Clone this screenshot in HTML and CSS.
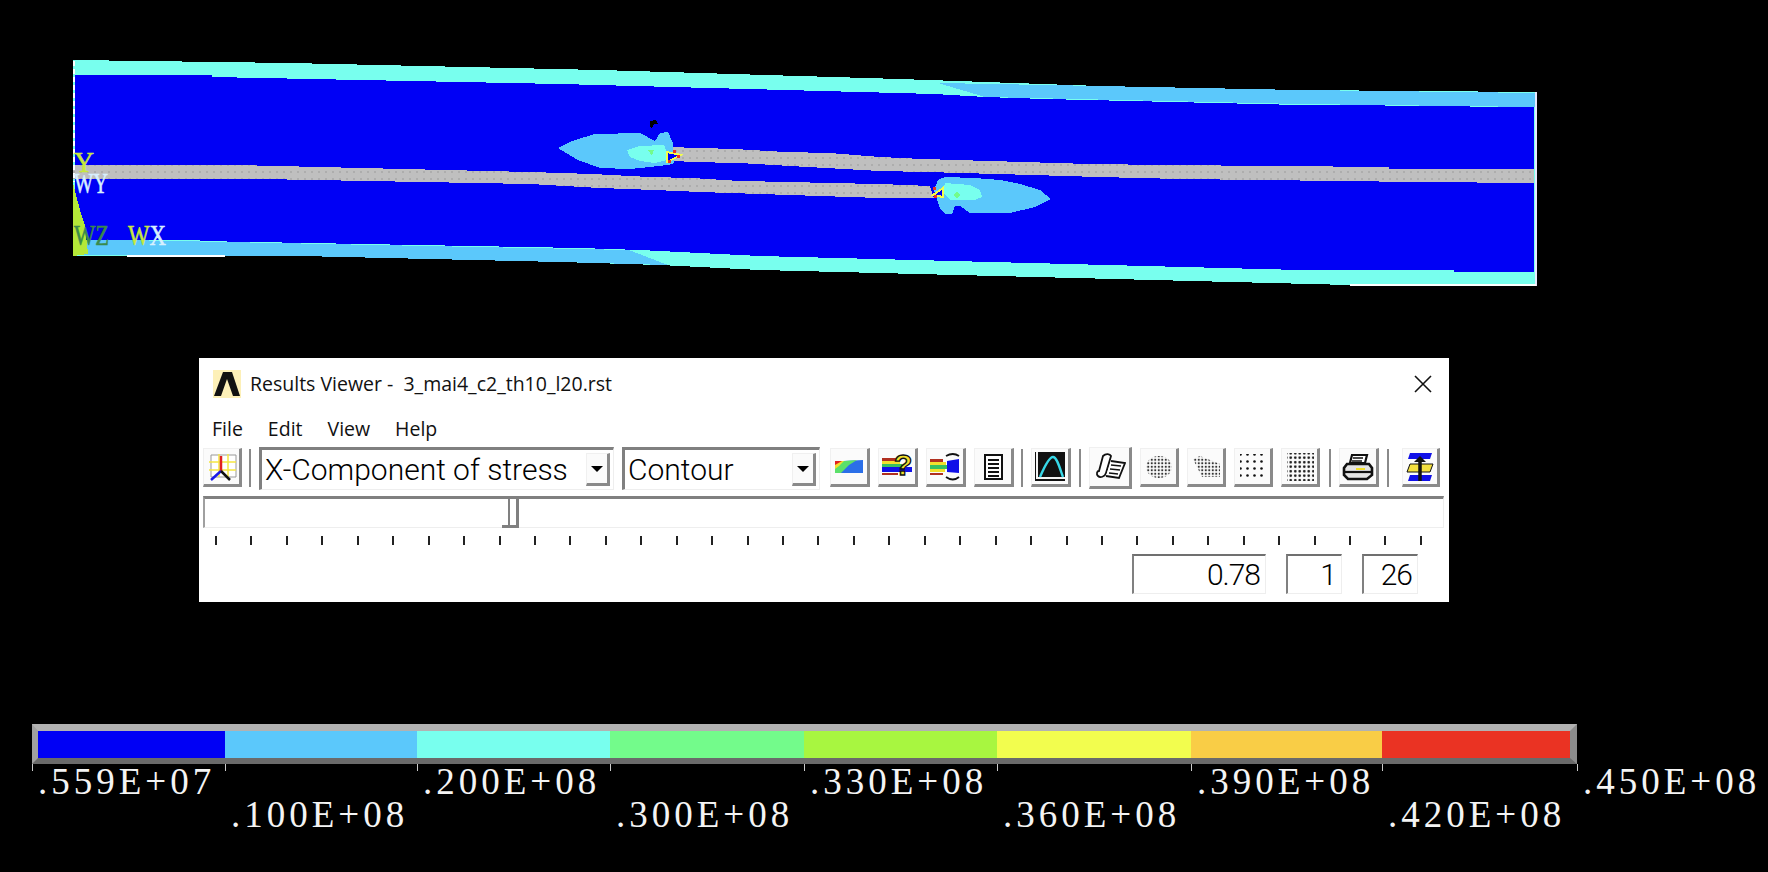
FILE: index.html
```html
<!DOCTYPE html>
<html lang="en">
<head>
    <meta charset="UTF-8">
    <title>Results Viewer</title>
    <link rel="stylesheet" href="styles.css">
</head>
<body>
    <svg class="plot" viewBox="0 0 1768 358">
        <defs>
            <pattern id="mesh" width="7" height="7" patternUnits="userSpaceOnUse">
                <rect width="7" height="7" fill="#bfbfbf"/>
                <rect x="3" y="3" width="1.5" height="1.5" fill="#adadad"/>
            </pattern>
        </defs>
        <!-- plate outline, aqua base -->
        <polygon fill="#78ffee" points="73,60 290,63 600,70 900,79 1100,86 1300,90 1536,92 1536,286 1350,285 760,270 660,265 560,262 300,256 73,256"/>
        <!-- wedges -->
        <polygon fill="#5bc8fb" points="938,83 1100,86 1300,90 1536,93 1536,107 1300,104 985,97"/>
        <polygon fill="#5bc8fb" points="73,239 629,250 668,265 560,262 300,256 73,255"/>
        <!-- blue body -->
        <polygon fill="#0000f5" points="75,75 212,75 212,77 560,84 935,94 985,97 1045,99 1300,105 1470,106 1470,107 1534,107 1534,272 1454,272 1454,270 1300,270 760,256 640,250 580,248 200,241 200,240 75,240"/>
        <!-- interface layers -->
        <polygon fill="url(#mesh)" points="667,147 735,149 785,152 830,153 880,157 923,159 1023,162 1090,164 1165,165 1389,167 1389,169 1534,169 1534,183 1419,182 1180,179 1098,177 1032,175 926,172 880,171 790,166 740,163 690,162 667,160"/>
        <polygon fill="url(#mesh)" points="73,165 235,165 530,172 592,174 650,177 692,178 740,181 790,182 830,183 880,184 930,186 934,198 880,198 790,195 700,192 655,190 600,188 530,184 260,179 73,179"/>
        <!-- crack tip contour, left -->
        <polygon fill="#5bc8fb" points="558,148 572,141 595,134 640,133 655,141 660,133 668,132 673,143 674,163 668,165 640,168 630,169 600,168 578,160"/>
        <polygon fill="#78ffee" points="627,150 640,146 664,145 667,152 667,160 655,163 640,161 630,157"/>
        <polygon fill="#73fb8b" points="648,150 654,150 652,156"/>
        <polygon fill="#0000f5" stroke="#f2fd4e" stroke-width="2" points="667,152 681,155 667,162"/>
        <rect x="673" y="150" width="3" height="3" fill="#ea3323"/>
        <rect x="677" y="155" width="3" height="3" fill="#ea3323"/>
        <rect x="668" y="160" width="3" height="3" fill="#ea3323"/>
        <path d="M650 121 L656 120 L658 124 L654 124 L652 128 L650 127 Z" fill="#000"/>
        <!-- crack tip contour, right -->
        <polygon fill="#5bc8fb" points="1051,199 1040,190 1020,184 1000,180 975,178 945,177 938,180 934,190 937,200 940,208 945,214 952,214 955,206 960,206 970,213 1010,213 1035,207"/>
        <polygon fill="#78ffee" points="945,183 970,185 980,190 982,197 975,200 950,200 943,193"/>
        <polygon fill="#73fb8b" points="957,191 960,195 957,199 954,195"/>
        <polygon fill="#0000f5" stroke="#f2fd4e" stroke-width="2" points="933,195 943,188 943,197"/>
        <rect x="933" y="187" width="3" height="3" fill="#ea3323"/>
        <rect x="934" y="195" width="3" height="3" fill="#ea3323"/>
        <!-- edges -->
        <path d="M74 61 V182" stroke="#fff" stroke-width="2" stroke-dasharray="5 3"/>
        <path d="M1536 92 V286" stroke="#e8e8ff" stroke-width="1.5"/>
        <path d="M1350 285 H1536 M127 256 H225" stroke="#fff" stroke-width="1.5"/>
        <!-- triad -->
        <polygon fill="#b4e838" points="73,183 76,195 80,210 85,225 88,254 73,256"/>
        <text class="triad triad-yellow" x="74" y="172" textLength="20" lengthAdjust="spacingAndGlyphs">Y</text>
        <text class="triad triad-white" x="74" y="193" textLength="34" lengthAdjust="spacingAndGlyphs">WY</text>
        <text class="triad triad-dark" x="74" y="245" textLength="35" lengthAdjust="spacingAndGlyphs">WZ</text>
        <text class="triad triad-yellow" x="128" y="245" textLength="38" lengthAdjust="spacingAndGlyphs">W<tspan class="triad-white">X</tspan></text>
    </svg>

    <div class="window">
        <div class="title-row">
            <svg class="app-icon" viewBox="0 0 28 28">
                <rect width="28" height="28" fill="#fdf0b8"/>
                <path d="M1 26 L10 2 H19 L27 26 H20 L14 9 L8 26 Z" fill="#111"/>
            </svg>
            <span class="title">Results Viewer -  3_mai4_c2_th10_l20.rst</span>
            <svg class="close" viewBox="0 0 18 18">
                <path d="M1 1 L17 17 M17 1 L1 17" stroke="#111" stroke-width="1.6"/>
            </svg>
        </div>
        <div class="menu">
            <span>File</span>
            <span>Edit</span>
            <span>View</span>
            <span>Help</span>
        </div>
        <div class="toolbar">
            <div class="btn btn-first">
                <svg viewBox="0 0 32 32">
                    <path d="M5 4 H30 V26 H5 Z" fill="#fff" stroke="#999"/>
                    <path d="M3 11 H30 M3 19 H30 M13 3 V26 M22 3 V26" stroke="#f5e642" stroke-width="1.5"/>
                    <path d="M15 20 V5" stroke="#e02020" stroke-width="2.5"/>
                    <path d="M15 20 L5 29" stroke="#1a1ae8" stroke-width="2.5"/>
                    <path d="M15 20 L24 29" stroke="#111" stroke-width="2.5"/>
                </svg>
            </div>
            <div class="sep sep-tight"></div>
            <div class="combo combo-item">
                <span>X-Component of stress</span>
                <div class="combo-arrow"></div>
            </div>
            <div class="combo combo-type">
                <span>Contour</span>
                <div class="combo-arrow"></div>
            </div>
            <div class="btn btn-group">
                <svg viewBox="0 0 32 32">
                    <polygon points="2,10 10,10 30,9 30,22 2,22" fill="#2b6fe8"/>
                    <polygon points="2,10 12,10 24,9 16,14 8,22 2,22" fill="#5be06a"/>
                    <polygon points="2,10 11,10 6,15 2,18" fill="#f2e02c"/>
                    <polygon points="2,10 9,10 2,14" fill="#e02020"/>
                </svg>
            </div>
            <div class="btn">
                <svg viewBox="0 0 32 32">
                    <rect x="1" y="7" width="18" height="3" fill="#b03020"/>
                    <rect x="1" y="10" width="18" height="3" fill="#f2e02c"/>
                    <rect x="1" y="13" width="20" height="3" fill="#38c060"/>
                    <rect x="1" y="16" width="30" height="5" fill="#1010e8"/>
                    <rect x="1" y="22" width="16" height="2" fill="#b03020"/>
                    <text class="query" x="13" y="24">?</text>
                </svg>
            </div>
            <div class="btn">
                <svg viewBox="0 0 32 32">
                    <rect x="1" y="8" width="13" height="3" fill="#b03020"/>
                    <rect x="1" y="11" width="16" height="3" fill="#f2e02c"/>
                    <rect x="1" y="14" width="18" height="4" fill="#38c060"/>
                    <polygon points="18,10 30,8 30,22 18,21" fill="#1010e8"/>
                    <rect x="1" y="18" width="15" height="3" fill="#f2e02c"/>
                    <rect x="1" y="22" width="13" height="2" fill="#b03020"/>
                    <path d="M17 5 Q24 1 30 5 M17 26 Q24 31 30 26" fill="none" stroke="#111" stroke-width="1.8"/>
                </svg>
            </div>
            <div class="btn">
                <svg viewBox="0 0 32 32">
                    <rect x="8" y="4" width="17" height="24" fill="#fff" stroke="#111" stroke-width="2"/>
                    <path d="M11 9 H22 M11 13 H22 M11 17 H22 M11 21 H22 M11 25 H22" stroke="#111" stroke-width="2"/>
                </svg>
            </div>
            <div class="sep sep-tight"></div>
            <div class="btn">
                <svg viewBox="0 0 32 32">
                    <rect x="1" y="1" width="30" height="29" fill="#111"/>
                    <path d="M3 1 V27 H31" fill="none" stroke="#f4f4f4" stroke-width="2"/>
                    <path d="M6 26 C12 12 16 6 19 6 C23 6 26 18 29 26" fill="none" stroke="#38d8e8" stroke-width="2.4"/>
                </svg>
            </div>
            <div class="sep"></div>
            <div class="btn btn-raised">
                <svg viewBox="0 0 32 32">
                    <path d="M9 5 C12 2 16 3 17 5 L12 22 C11 26 6 27 4 25 C2 23 3 20 5 20 Z" fill="#fff" stroke="#111" stroke-width="1.8"/>
                    <path d="M17 10 L31 12 L25 27 L12 25" fill="#fff" stroke="#111" stroke-width="1.8"/>
                    <path d="M17 14 L27 15 M16 18 L26 19 M15 22 L24 23" stroke="#111" stroke-width="1.6"/>
                </svg>
            </div>
            <div class="btn btn-narrow">
                <svg viewBox="0 0 32 32">
                    <defs>
                        <pattern id="dots-fine" width="3.5" height="3.5" patternUnits="userSpaceOnUse">
                            <circle cx="1.75" cy="1.75" r="1.1" fill="#333"/>
                        </pattern>
                    </defs>
                    <ellipse cx="16" cy="16" rx="13" ry="11" fill="url(#dots-fine)"/>
                </svg>
            </div>
            <div class="btn btn-narrow">
                <svg viewBox="0 0 32 32">
                    <polygon points="3,8 10,5 30,13 30,26 12,26 6,14" fill="url(#dots-fine)"/>
                </svg>
            </div>
            <div class="btn btn-narrow">
                <svg viewBox="0 0 32 32">
                    <defs>
                        <pattern id="dots-wide" width="7" height="7" patternUnits="userSpaceOnUse">
                            <circle cx="3.5" cy="3.5" r="1.3" fill="#111"/>
                        </pattern>
                    </defs>
                    <rect x="3" y="3" width="26" height="26" fill="url(#dots-wide)"/>
                </svg>
            </div>
            <div class="btn btn-narrow">
                <svg viewBox="0 0 32 32">
                    <defs>
                        <pattern id="dots-mid" width="4.5" height="4.5" patternUnits="userSpaceOnUse">
                            <circle cx="2.25" cy="2.25" r="1.3" fill="#111"/>
                        </pattern>
                    </defs>
                    <rect x="3" y="2" width="27" height="28" fill="url(#dots-mid)"/>
                </svg>
            </div>
            <div class="sep sep-wide"></div>
            <div class="btn">
                <svg viewBox="0 0 32 32">
                    <polygon points="10,4 25,4 23,12 8,12" fill="#fff" stroke="#111" stroke-width="2.2"/>
                    <path d="M11 7 H21 M10 10 H20" stroke="#111" stroke-width="1.4"/>
                    <path d="M5 13 H27 L30 17 V24 L25 28 H6 L2 24 V17 Z" fill="#e4e4e4" stroke="#111" stroke-width="2.6"/>
                    <path d="M3 21 H29" stroke="#111" stroke-width="2.2"/>
                    <rect x="14" y="17" width="9" height="2" fill="#f2e02c"/>
                </svg>
            </div>
            <div class="sep"></div>
            <div class="btn btn-last">
                <svg viewBox="0 0 32 32">
                    <polygon points="6,2 28,2 26,8 4,8" fill="#1010e8"/>
                    <polygon points="6,13 29,13 26,21 3,21" fill="#f4e040" stroke="#111"/>
                    <polygon points="6,24 28,24 26,30 4,30" fill="#1010e8"/>
                    <path d="M16 30 V9" stroke="#111" stroke-width="3.5"/>
                    <path d="M10 11 L16 5 L22 11 Z" fill="#111"/>
                </svg>
            </div>
        </div>
        <div class="slider">
            <div class="thumb"></div>
        </div>
        <div class="ticks">
            <i></i><i></i><i></i><i></i><i></i><i></i><i></i>
            <i></i><i></i><i></i><i></i><i></i><i></i><i></i>
            <i></i><i></i><i></i><i></i><i></i><i></i><i></i>
            <i></i><i></i><i></i><i></i><i></i><i></i><i></i>
            <i></i><i></i><i></i><i></i><i></i><i></i><i></i>
        </div>
        <div class="values">
            <div class="value value-time">0.78</div>
            <div class="value value-step">1</div>
            <div class="value value-step">26</div>
        </div>
    </div>

    <div class="legend">
        <div class="legend-bar">
            <div class="seg seg-1"></div>
            <div class="seg seg-2"></div>
            <div class="seg seg-3"></div>
            <div class="seg seg-4"></div>
            <div class="seg seg-5"></div>
            <div class="seg seg-6"></div>
            <div class="seg seg-7"></div>
            <div class="seg seg-8"></div>
        </div>
        <div class="legend-scale">
            <i></i><i></i><i></i><i></i><i></i><i></i><i></i><i></i><i></i>
            <span>.559E+07</span>
            <span></span>
            <span>.200E+08</span>
            <span></span>
            <span>.330E+08</span>
            <span></span>
            <span>.390E+08</span>
            <span></span>
            <span>.450E+08</span>
            <span></span>
            <span>.100E+08</span>
            <span></span>
            <span>.300E+08</span>
            <span></span>
            <span>.360E+08</span>
            <span></span>
            <span>.420E+08</span>
            <span></span>
        </div>
    </div>
</body>
</html>
```

FILE: styles.css
```css
html, body {
    margin: 0;
    padding: 0;
    background: #000;
    overflow: hidden;
}
body {
    width: 1768px;
    height: 872px;
}
.plot {
    display: block;
    width: 1768px;
    height: 358px;
    shape-rendering: crispEdges;
}
.triad {
    font-family: "Liberation Serif", serif;
    font-size: 30px;
    stroke-width: 0.6px;
}
.triad-yellow {
    fill: #c8e83c;
    stroke: #c8e83c;
}
.triad-white {
    fill: #d8f0ff;
    stroke: #d8f0ff;
}
.triad-dark {
    fill: #3a8a4a;
    stroke: #3a8a4a;
}
.query {
    font-family: "Liberation Sans", sans-serif;
    font-weight: bold;
    font-size: 30px;
    fill: #f2e02c;
    stroke: #111;
    stroke-width: 1.4px;
}

/* results viewer window */
.window {
    width: 1250px;
    height: 244px;
    margin-left: 199px;
    background: #fff;
    font-family: "Open Sans", "Liberation Sans", sans-serif;
    color: #111;
}
.title-row {
    display: flex;
    align-items: center;
    height: 47px;
    padding: 4px 17px 0 14px;
    box-sizing: border-box;
}
.app-icon {
    width: 28px;
    height: 28px;
    margin-right: 9px;
}
.title {
    flex: 1;
    font-size: 19.5px;
    white-space: pre;
}
.close {
    width: 18px;
    height: 18px;
}
.menu {
    display: flex;
    align-items: center;
    gap: 25px;
    height: 42px;
    box-sizing: border-box;
    padding: 4px 0 0 13px;
    font-size: 19.5px;
}
.toolbar {
    display: flex;
    align-items: flex-start;
    gap: 8px;
    height: 43px;
    padding-left: 4px;
}
.btn {
    display: flex;
    align-items: center;
    justify-content: center;
    width: 40px;
    height: 39px;
    margin-top: 1px;
    box-sizing: border-box;
    background: #fbfbfb;
    border-top: 1px solid #f0f0f0;
    border-left: 1px solid #f0f0f0;
    border-right: 3px solid #8a8a8a;
    border-bottom: 3px solid #8a8a8a;
}
.btn svg {
    width: 32px;
    height: 32px;
}
.btn-first {
    width: 39px;
}
.btn-group {
    margin-left: 2px;
}
.btn-raised {
    width: 43px;
    height: 42px;
    margin-top: 0;
}
.btn-narrow {
    width: 39px;
}
.btn-last {
    width: 38px;
    margin-left: 5px;
}
.sep {
    width: 2px;
    height: 38px;
    margin-top: 2px;
    background: #8a8a8a;
}
.sep-tight {
    margin-left: -1px;
}
.sep-wide {
    margin-left: 1px;
}
.combo {
    display: flex;
    align-items: center;
    justify-content: space-between;
    height: 43px;
    box-sizing: border-box;
    border-top: 3px solid #808080;
    border-left: 3px solid #808080;
    border-right: 1px solid #eee;
    border-bottom: 1px solid #eee;
    padding: 3px;
    font-family: "Roboto", "Liberation Sans", sans-serif;
    font-weight: 300;
    font-size: 30px;
    line-height: 33px;
    color: #000;
}
.combo-item {
    width: 355px;
}
.combo-type {
    width: 198px;
}
.combo-arrow {
    position: relative;
    width: 24px;
    height: 33px;
    box-sizing: border-box;
    background: #fbfbfb;
    border-top: 1px solid #f0f0f0;
    border-left: 1px solid #f0f0f0;
    border-right: 3px solid #8a8a8a;
    border-bottom: 3px solid #8a8a8a;
}
.combo-arrow::after {
    content: "";
    position: absolute;
    left: 4px;
    top: 12px;
    border-top: 6px solid #000;
    border-left: 6px solid transparent;
    border-right: 6px solid transparent;
}
.slider {
    position: relative;
    height: 32px;
    margin: 6px 5px 0 4px;
    box-sizing: border-box;
    border-top: 3px solid #808080;
    border-left: 2px solid #a0a0a0;
    border-right: 1px solid #eee;
    border-bottom: 1px solid #eee;
}
.thumb {
    position: absolute;
    left: 303px;
    top: 0;
    bottom: -1px;
    width: 6px;
    border-left: 2px solid #808080;
    border-right: 3px solid #808080;
    border-bottom: 3px solid #808080;
}
.thumb::before {
    content: "";
    position: absolute;
    left: -8px;
    bottom: -3px;
    width: 8px;
    height: 3px;
    background: #808080;
}
.ticks {
    display: flex;
    justify-content: space-between;
    height: 9px;
    margin: 8px 27px 0 16px;
}
.ticks i {
    width: 2px;
    background: #222;
}
.values {
    display: flex;
    justify-content: flex-end;
    gap: 20px;
    margin-top: 9px;
    padding-right: 31px;
}
.value {
    height: 40px;
    box-sizing: border-box;
    border-top: 2px solid #707070;
    border-left: 2px solid #808080;
    border-right: 1px solid #eee;
    border-bottom: 1px solid #eee;
    padding-right: 5px;
    text-align: right;
    font-family: "Roboto", "Liberation Sans", sans-serif;
    font-weight: 300;
    font-size: 30px;
    letter-spacing: -1px;
    line-height: 37px;
    color: #000;
}
.value-time {
    width: 134px;
}
.value-step {
    width: 56px;
}

/* colour legend */
.legend {
    width: 1545px;
    margin: 122px 0 0 32px;
}
.legend-bar {
    display: grid;
    grid-template-columns: 187px 192px 193px 194px 193px 194px 191px 188px;
    height: 40px;
    box-sizing: border-box;
    border-top: 7px solid #b2b2b2;
    border-left: 6px solid #a0a0a0;
    border-right: 7px solid #8c8c8c;
    border-bottom: 6px solid #6a6a6a;
}
.seg-1 { background: #0000f5; }
.seg-2 { background: #5bc8fb; }
.seg-3 { background: #78ffee; }
.seg-4 { background: #73fb8b; }
.seg-5 { background: #a8f640; }
.seg-6 { background: #f2fd4e; }
.seg-7 { background: #f9cd46; }
.seg-8 { background: #ea3323; }
.legend-scale {
    display: grid;
    grid-template-columns: 193px 192px 193px 194px 193px 194px 191px 195px 190px;
    grid-template-rows: 1px 33px 33px;
    font-family: "Liberation Serif", serif;
    font-size: 37px;
    letter-spacing: 4px;
    line-height: 33px;
    color: #f4f4f4;
}
.legend-scale i {
    grid-row: 1;
    height: 7px;
    width: 1px;
    background: #ccc;
}
.legend-scale span {
    padding-left: 6px;
    white-space: nowrap;
}
```
